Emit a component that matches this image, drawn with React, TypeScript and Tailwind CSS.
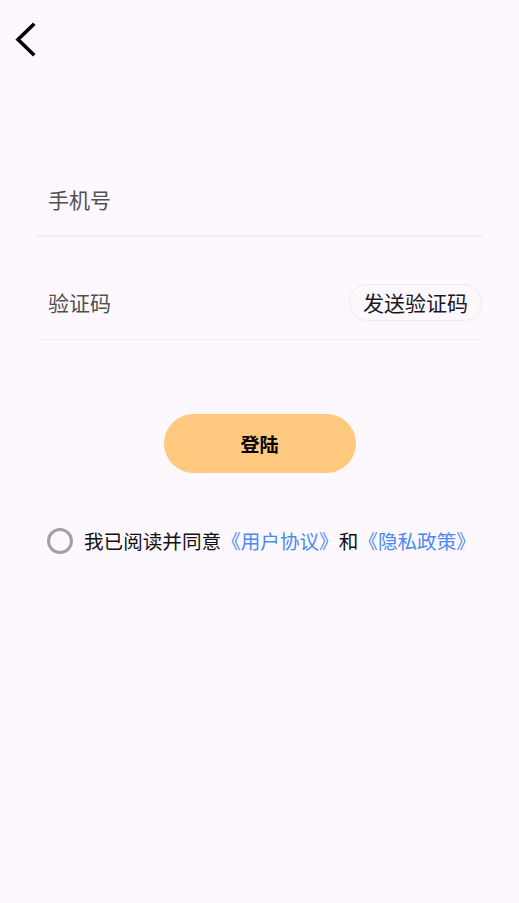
import React from "react";

export default function App() {
  return (
    <div
      className="w-[519px] h-[903px] bg-[#fdf7fe] overflow-hidden"
      style={{ fontFamily: '"Noto Sans CJK SC", "Noto Sans", sans-serif' }}
    >
      <div className="h-[80px] pt-[22px] pl-[13px]">
        <svg width="26" height="36" viewBox="0 0 26 36" fill="none">
          <path d="M20 3 L5 17.5 L20 32" stroke="#000" strokeWidth="3.6" strokeLinecap="square" strokeLinejoin="miter" />
        </svg>
      </div>

      <div className="px-[37px] pt-[89px]">
        <div className="h-[68px] pb-[6px] flex items-center pl-[11px] border-b-2 border-[#efedf0]">
          <span className="text-[21px] text-[#505050] leading-none">手机号</span>
        </div>

        <div className="mt-[35px] h-[68px] pb-[6px] flex items-center justify-between pl-[11px] border-b border-[#efedf0]">
          <span className="text-[21px] text-[#505050] leading-none">验证码</span>
          <button className="h-[37px] px-[13px] rounded-full border border-[#ecebed] text-[21px] text-[#1a1a1a] leading-none bg-transparent">
            发送验证码
          </button>
        </div>

        <div className="flex justify-center mt-[74px]">
          <button className="w-[192px] h-[59px] rounded-full bg-[#ffc97f] text-[19px] font-bold text-black leading-none">
            登陆
          </button>
        </div>

        <div className="mt-[53px] flex items-center h-[30px] pl-[10px]">
          <div className="w-[26px] h-[26px] rounded-full border-[3px] border-[#a2a2a2]" />
          <div className="ml-[11px] text-[19.6px] leading-none text-[#111]">
            我已阅读并同意<span className="text-[#4a8af4]">《用户协议》</span>和<span className="text-[#4a8af4]">《隐私政策》</span>
          </div>
        </div>
      </div>
    </div>
  );
}
